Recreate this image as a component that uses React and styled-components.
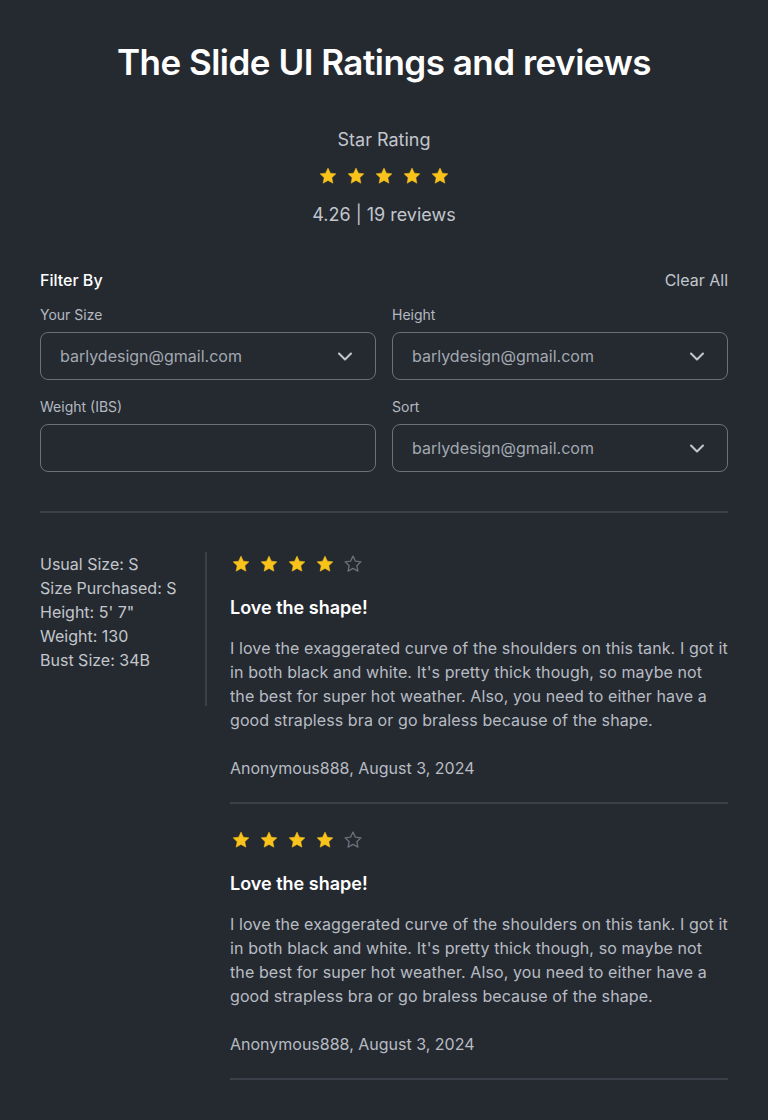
import React from 'react';
import styled, { createGlobalStyle } from 'styled-components';

const GlobalStyle = createGlobalStyle`
  body {
    margin: 0;
    background: #252a31;
    font-family: Inter, "Noto Sans", sans-serif;
    -webkit-font-smoothing: antialiased;
  }
`;

const Page = styled.div`
  min-height: 1120px;
  background: #252a31;
  padding: 40px 40px 0;
  box-sizing: border-box;
`;

const Title = styled.h1`
  margin: 0;
  text-align: center;
  font-size: 35px;
  line-height: 44px;
  font-weight: 600;
  color: #ffffff;
  letter-spacing: -0.5px;
`;

const Summary = styled.div`
  margin-top: 43px;
  display: flex;
  flex-direction: column;
  align-items: center;
`;

const SummaryLabel = styled.div`
  font-size: 18px;
  line-height: 26px;
  color: #c2c6cc;
`;

const SummaryStats = styled.div`
  margin-top: 14px;
  font-size: 18px;
  line-height: 26px;
  color: #c2c6cc;
`;

const StarRow = styled.div`
  display: flex;
  align-items: center;
  height: 24px;
  gap: ${(p) => p.$gap}px;
  margin-top: ${(p) => p.$top || 0}px;
  padding-left: ${(p) => p.$indent || 0}px;
`;

const FilterHead = styled.div`
  margin-top: 40px;
  display: flex;
  justify-content: space-between;
  align-items: center;
`;

const FilterTitle = styled.div`
  font-size: 16px;
  line-height: 24px;
  font-weight: 500;
  color: #ffffff;
`;

const ClearAll = styled.button`
  background: none;
  border: none;
  padding: 0;
  font: inherit;
  font-size: 16px;
  line-height: 24px;
  color: #c2c6cc;
  cursor: pointer;
`;

const FilterGrid = styled.div`
  margin-top: 14px;
  display: grid;
  grid-template-columns: 1fr 1fr;
  column-gap: 16px;
  row-gap: 18px;
`;

const Field = styled.label`
  display: flex;
  flex-direction: column;
  gap: 8px;
`;

const FieldLabel = styled.span`
  font-size: 14px;
  line-height: 18px;
  color: #b4b9c0;
`;

const Box = styled.div`
  height: 48px;
  box-sizing: border-box;
  border: 1px solid #6b7079;
  border-radius: 8px;
  display: flex;
  align-items: center;
  justify-content: space-between;
  padding: 0 18px 0 19px;
  font-size: 16px;
  color: #a3a8b0;
`;

const Divider = styled.hr`
  margin: ${(p) => p.$margin};
  border: none;
  border-top: 2px solid #3a4049;
`;

const Reviews = styled.div`
  display: grid;
  grid-template-columns: 167px 1fr;
  column-gap: 23px;
  align-items: start;
`;

const Sidebar = styled.div`
  border-right: 2px solid #3a4049;
  padding: 0 0 34px;
  font-size: 16px;
  line-height: 24px;
  color: #c2c6cc;
`;

const ReviewList = styled.div`
  display: flex;
  flex-direction: column;
`;

const Review = styled.div`
  padding-top: ${(p) => (p.$first ? 0 : 24)}px;
`;

const ReviewTitle = styled.div`
  margin-top: 19px;
  font-size: 18px;
  line-height: 26px;
  font-weight: 600;
  color: #ffffff;
`;

const ReviewBody = styled.p`
  margin: 15px 0 0;
  font-size: 16px;
  line-height: 24px;
  letter-spacing: 0.1px;
  color: #b8bcc3;
`;

const Author = styled.div`
  margin-top: 24px;
  font-size: 16px;
  line-height: 24px;
  color: #b8bcc3;
`;

const StarIcon = ({ filled, size }) => (
  <svg width={size} height={size} viewBox="0 0 24 24">
    <path
      d="M12 2.5l2.9 6.1 6.6.8-4.9 4.6 1.3 6.6L12 17.3l-5.9 3.3 1.3-6.6-4.9-4.6 6.6-.8z"
      fill={filled ? '#f9c31b' : 'none'}
      stroke={filled ? '#f9c31b' : '#6a707a'}
      strokeWidth={filled ? 0.6 : 1.6}
      strokeLinejoin="round"
    />
  </svg>
);

const Stars = ({ count, size, gap, top, indent }) => (
  <StarRow $gap={gap} $top={top} $indent={indent}>
    {[0, 1, 2, 3, 4].map((i) => (
      <StarIcon key={i} filled={i < count} size={size} />
    ))}
  </StarRow>
);

const Chevron = () => (
  <svg width="24" height="24" viewBox="0 0 24 24" fill="none" stroke="#c2c6cc" strokeWidth="2.1" strokeLinecap="round" strokeLinejoin="round">
    <path d="M6 9.5l6 6 6-6" />
  </svg>
);

const filters = [
  { label: 'Your Size', value: 'barlydesign@gmail.com' },
  { label: 'Height', value: 'barlydesign@gmail.com' },
  { label: 'Weight (IBS)', value: '' },
  { label: 'Sort', value: 'barlydesign@gmail.com' },
];

const reviews = [
  {
    id: 1,
    rating: 4,
    title: 'Love the shape!',
    body: "I love the exaggerated curve of the shoulders on this tank. I got it in both black and white. It's pretty thick though, so maybe not the best for super hot weather. Also, you need to either have a good strapless bra or go braless because of the shape.",
    author: 'Anonymous888, August 3, 2024',
  },
  {
    id: 2,
    rating: 4,
    title: 'Love the shape!',
    body: "I love the exaggerated curve of the shoulders on this tank. I got it in both black and white. It's pretty thick though, so maybe not the best for super hot weather. Also, you need to either have a good strapless bra or go braless because of the shape.",
    author: 'Anonymous888, August 3, 2024',
  },
];

const App = () => (
  <Page>
    <GlobalStyle />
    <Title>The Slide UI Ratings and reviews</Title>

    <Summary>
      <SummaryLabel>Star Rating</SummaryLabel>
      <Stars count={5} size={20} gap={8} top={11} />
      <SummaryStats>4.26 | 19 reviews</SummaryStats>
    </Summary>

    <FilterHead>
      <FilterTitle>Filter By</FilterTitle>
      <ClearAll>Clear All</ClearAll>
    </FilterHead>

    <FilterGrid>
      {filters.map((f) => (
        <Field key={f.label}>
          <FieldLabel>{f.label}</FieldLabel>
          <Box>
            <span>{f.value}</span>
            {f.value && <Chevron />}
          </Box>
        </Field>
      ))}
    </FilterGrid>

    <Divider $margin="39px 0 39px" />

    <Reviews>
      <Sidebar>
        <div>Usual Size: S</div>
        <div>Size Purchased: S</div>
        <div>Height: 5' 7"</div>
        <div>Weight: 130</div>
        <div>Bust Size: 34B</div>
      </Sidebar>
      <ReviewList>
        {reviews.map((r, i) => (
          <Review key={r.id} $first={i === 0}>
            <Stars count={r.rating} size={20} gap={8} indent={1} />
            <ReviewTitle>{r.title}</ReviewTitle>
            <ReviewBody>{r.body}</ReviewBody>
            <Author>{r.author}</Author>
            <Divider $margin="22px 0 0" />
          </Review>
        ))}
      </ReviewList>
    </Reviews>
  </Page>
);

export default App;
